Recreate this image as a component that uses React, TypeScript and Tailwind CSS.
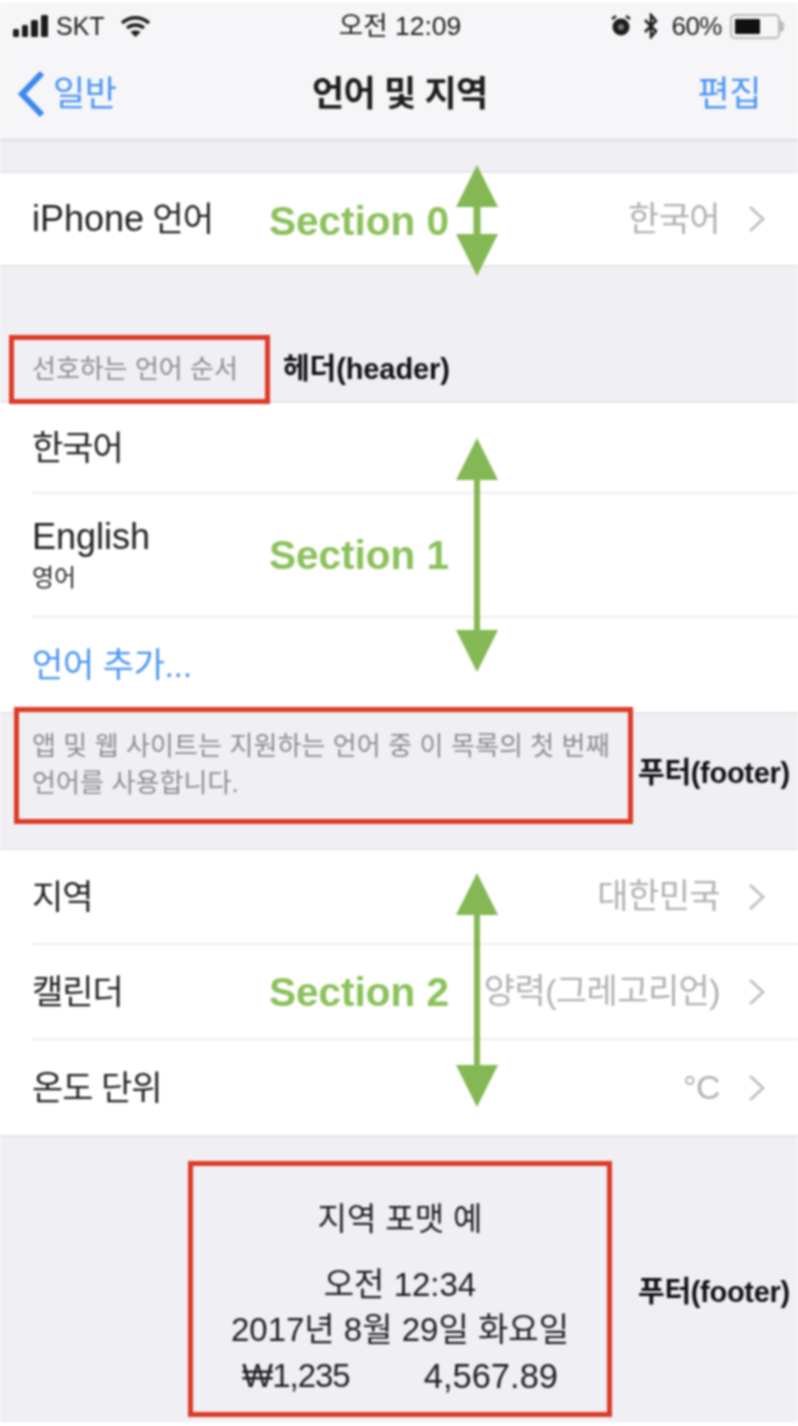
import type { ReactNode } from 'react';

const FONT = "font-['Liberation_Sans','Noto_Sans_CJK_KR',sans-serif]";

function Chevron() {
  return (
    <svg width="18" height="28" viewBox="0 0 18 28" fill="none" stroke="#c2c2c6" strokeWidth="3">
      <path d="M2 2L15 14L2 26" />
    </svg>
  );
}

function Row({ label, value, sub, h, divider, blue }: { label: ReactNode; value?: string; sub?: string; h: string; divider?: boolean; blue?: boolean }) {
  return (
    <div className="pl-8">
      <div className={`flex items-center justify-between pr-[32px] ${h} ${divider ? 'border-b-2 border-[#eeeef0]' : ''}`}>
        <div className="flex flex-col">
          <span className={`text-[34px] leading-[40px] ${blue ? 'text-[#4a94f4] tracking-[-0.4px]' : 'text-[#1f1f21] tracking-[-1px]'}`}>{label}</span>
          {sub && <span className="text-[24px] leading-[30px] mt-[6px] text-[#2a2a2c]">{sub}</span>}
        </div>
        {value && (
          <div className="flex items-center gap-[28px]">
            <span className="text-[34px] tracking-[-0.6px] text-[#b0b0b4]">{value}</span>
            <Chevron />
          </div>
        )}
      </div>
    </div>
  );
}

// green double arrow spanning top..bottom of a section
function Arrow({ top, height, neck = 6 }: { top: string; height: number; neck?: number }) {
  return (
    <svg className={`absolute left-[456px] ${top}`} width="42" height={height} viewBox={`0 0 42 ${height}`}>
      <rect x={21 - neck / 2} y="40" width={neck} height={height - 80} fill="#84b854" />
      <path d="M21 0L42 42H0Z" fill="#84b854" />
      <path d={`M21 ${height}L42 ${height - 42}H0Z`} fill="#84b854" />
    </svg>
  );
}

function StatusBar() {
  return (
    <div className="flex items-center justify-between h-[46px] pl-[13px] pr-[14px] text-[#1c1c1c]">
      <div className="flex items-center w-[300px]">
        <svg width="36" height="22" viewBox="0 0 36 22" fill="#1c1c1c">
          <rect x="0" y="14" width="6" height="8" rx="1.5" />
          <rect x="9" y="10" width="6" height="12" rx="1.5" />
          <rect x="18" y="5" width="7" height="17" rx="1.5" />
          <rect x="28" y="0" width="7" height="22" rx="1.5" />
        </svg>
        <span className="text-[25px] ml-[7px] leading-none">SKT</span>
        <svg className="ml-[15px]" width="31" height="23" viewBox="0 0 31 23" fill="none" stroke="#1c1c1c" strokeWidth="3.5">
          <path d="M2 8C10 1 21 1 29 8" />
          <path d="M7 13C12 9 19 9 24 13" />
          <path d="M15.5 22L10.5 17C13 15 18 15 20.5 17Z" fill="#1c1c1c" stroke="none" />
        </svg>
      </div>
      <span className="text-[26.5px] leading-none pl-[3px]">오전 12:09</span>
      <div className="flex items-center justify-end w-[300px]">
        <svg width="20" height="22" viewBox="0 0 20 22">
          <circle cx="10" cy="12" r="8.5" fill="#1c1c1c" />
          <circle cx="10" cy="12" r="3" fill="#777" />
          <path d="M1 4L5 1M19 4L15 1" stroke="#1c1c1c" strokeWidth="2.5" />
        </svg>
        <svg className="ml-[12px]" width="16" height="26" viewBox="0 0 16 26" fill="none" stroke="#1c1c1c" strokeWidth="2.5">
          <path d="M2 7L13 18L8 24V2L13 8L2 19" />
        </svg>
        <span className="text-[26px] leading-none ml-[12px] tracking-[-0.5px]">60%</span>
        <div className="ml-[8px] flex items-center">
          <div className="w-[50px] h-[25px] rounded-[5px] border-2 border-[#bbb] p-[3px]">
            <div className="w-[25px] h-full bg-[#111] rounded-[1px]" />
          </div>
          <div className="w-[4px] h-[11px] bg-[#bbb] rounded-r-sm" />
        </div>
      </div>
    </div>
  );
}

export default function App() {
  return (
    <div className={`relative w-[798px] h-[1426px] overflow-hidden bg-white pt-[3px] blur-[0.9px] ${FONT}`}>
      <div className="bg-[#f6f6f8] h-[138px] border-b-2 border-[#dcdce0]">
        <StatusBar />
        <div className="relative flex items-center justify-between h-[90px] pl-[16px] pr-[37px]">
          <div className="flex items-center gap-[7px]">
            <svg width="30" height="48" viewBox="0 0 30 48" fill="none" stroke="#3d88f0" strokeWidth="6">
              <path d="M26 3L6 24L26 45" />
            </svg>
            <span className="text-[35px] text-[#4a94f4] tracking-[-0.5px]">일반</span>
          </div>
          <span className="text-[35px] font-bold text-[#1c1c1c] tracking-[-0.7px] absolute left-[312px]">언어 및 지역</span>
          <span className="text-[35px] text-[#4a94f4] tracking-[-0.5px]">편집</span>
        </div>
      </div>

      <div className="bg-[#efeff4]">
        <div className="h-[30px]" />
        <div className="bg-white border-y-2 border-[#e6e6ea]">
          <Row label={<><span className="text-[36px] tracking-normal">iPhone</span> 언어</>} value="한국어" h="h-[92px]" />
        </div>

        <div className="h-[134px] flex items-end">
          <span className="pl-8 pb-[17px] text-[26px] leading-[30px] text-[#8c8c90]">선호하는 언어 순서</span>
        </div>
        <div className="bg-white border-y-2 border-[#e6e6ea]">
          <Row label="한국어" h="h-[91px]" divider />
          <Row label={<span className="text-[36px] tracking-normal">English</span>} sub="영어" h="h-[124px]" divider />
          <Row label="언어 추가..." h="h-[94px]" blue />
        </div>

        <div className="h-[134px] pt-[14px] pl-8 text-[26px] leading-[37px] tracking-[0.1px] text-[#8c8c90]">
          <p>앱 및 웹 사이트는 지원하는 언어 중 이 목록의 첫 번째</p>
          <p>언어를 사용합니다.</p>
        </div>
        <div className="bg-white border-y-2 border-[#e6e6ea]">
          <Row label="지역" value="대한민국" h="h-[95px]" divider />
          <Row label="캘린더" value="양력(그레고리언)" h="h-[95px]" divider />
          <Row label="온도 단위" value="°C" h="h-[95px]" />
        </div>

        <div className="h-[285px] flex flex-col items-center pl-[2px] pt-[62px] text-[#1f1f21]">
          <span className="text-[32px] leading-[40px]">지역 포맷 예</span>
          <span className="text-[33px] leading-[44px] mt-[24px]">오전 12:34</span>
          <span className="text-[33px] leading-[46px]">2017년 8월 29일 화요일</span>
          <div className="flex gap-[74px] text-[33px] leading-[46px]">
            <span className="tracking-[-1px]">₩1,235</span>
            <span className="text-[34.5px]">4,567.89</span>
          </div>
        </div>
      </div>

      {/* annotations over the screenshot */}
      <div className="absolute left-[9px] top-[335px] w-[261px] h-[69px] border-[5px] border-[#de3a26]" />
      <div className="absolute left-[14px] top-[707px] w-[619px] h-[117px] border-[5px] border-[#de3a26]" />
      <div className="absolute left-[188px] top-[1161px] w-[424px] h-[256px] border-[5px] border-[#de3a26]" />

      <span className="absolute left-[283px] top-[352px] text-[29px] leading-[34px] font-bold tracking-[-0.1px] text-[#111]">헤더(header)</span>
      <span className="absolute left-[638px] top-[756px] text-[29px] leading-[34px] font-bold tracking-[-0.3px] text-[#111]">푸터(footer)</span>
      <span className="absolute left-[638px] top-[1275px] text-[29px] leading-[34px] font-bold tracking-[-0.3px] text-[#111]">푸터(footer)</span>

      <span className="absolute left-[269px] top-[198px] text-[40.5px] leading-[46px] font-bold text-[#8bc15b]">Section 0</span>
      <span className="absolute left-[269px] top-[532px] text-[40.5px] leading-[46px] font-bold text-[#8bc15b]">Section 1</span>
      <span className="absolute left-[269px] top-[969px] text-[40.5px] leading-[46px] font-bold text-[#8bc15b]">Section 2</span>

      <Arrow top="top-[165px]" height={111} neck={7} />
      <Arrow top="top-[438px]" height={234} />
      <Arrow top="top-[873px]" height={234} />
    </div>
  );
}
